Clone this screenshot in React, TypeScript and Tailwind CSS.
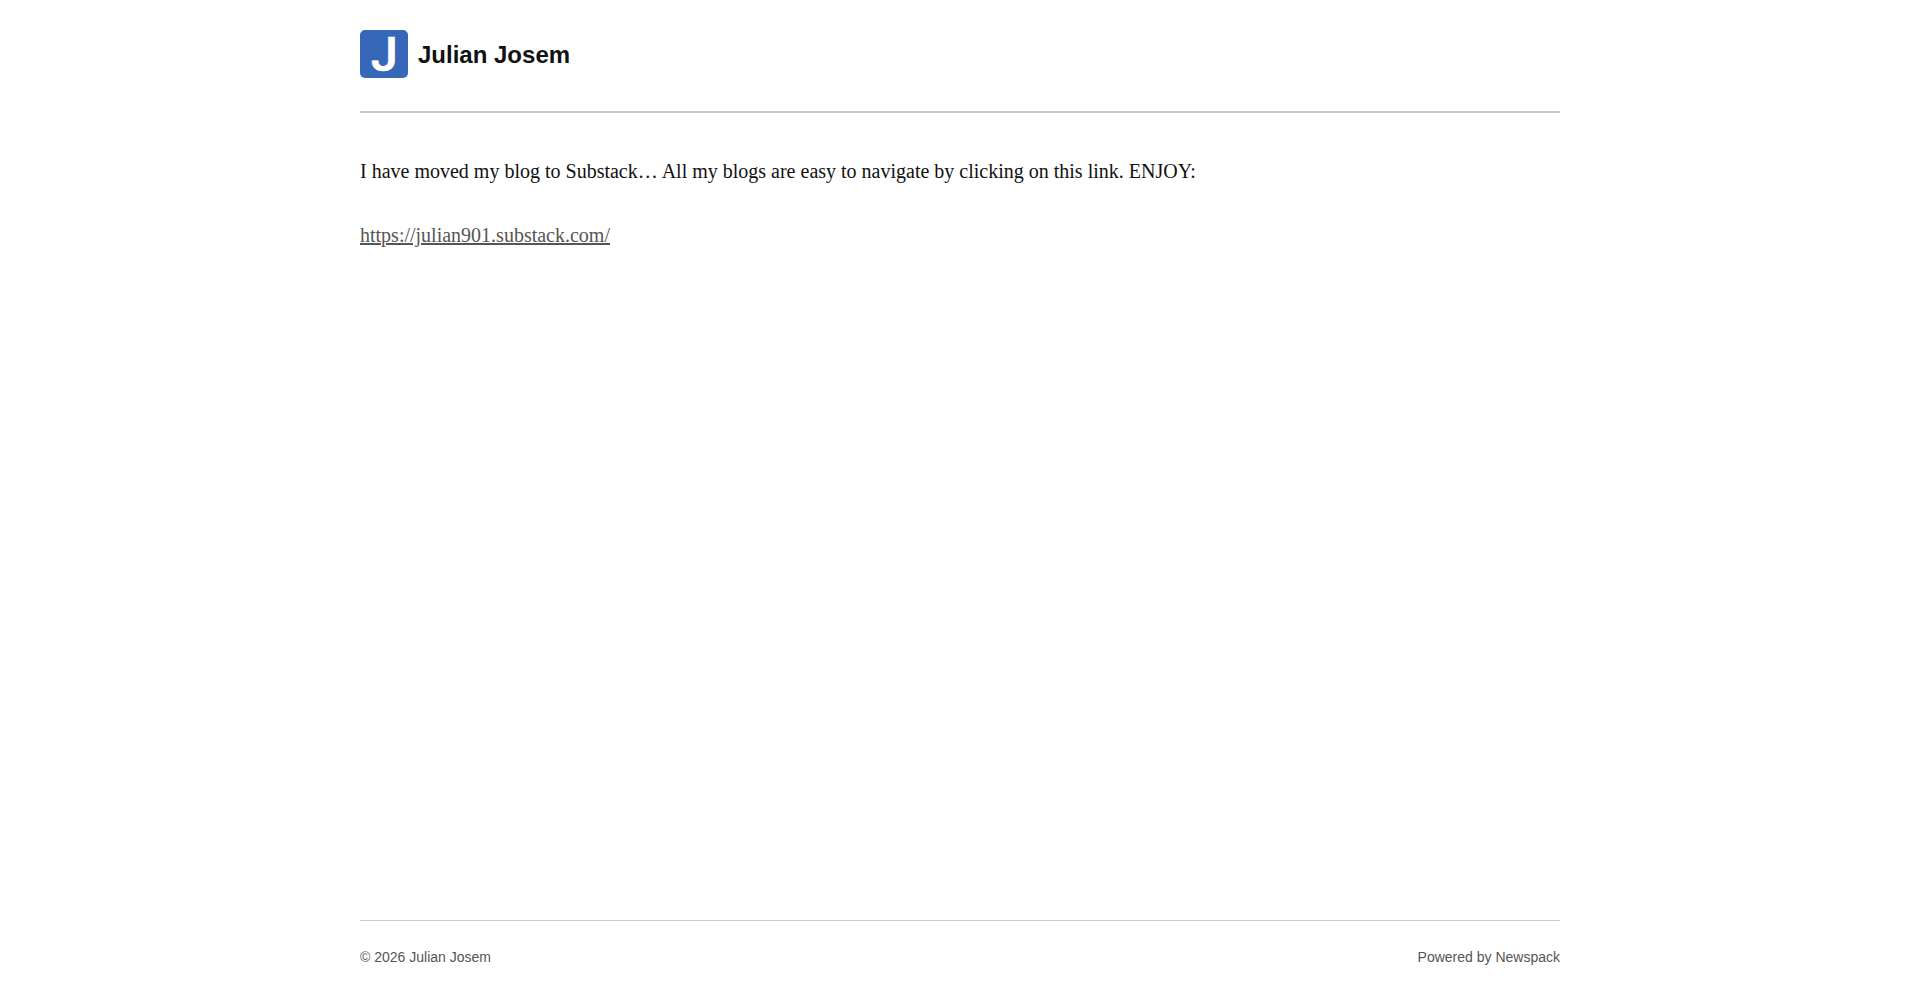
export default function App() {
  return (
    <div className="min-h-screen flex flex-col bg-white text-[#111] font-['Liberation_Sans',sans-serif]">
      <header className="w-full max-w-[1200px] mx-auto">
        <div className="flex items-center gap-2.5 pt-[30px] pb-[33px]">
          <a href="#" aria-label="Julian Josem home">
            <svg viewBox="0 0 48 48" className="w-12 h-12 overflow-visible" aria-hidden="true">
              <rect width="48" height="48" rx="5" fill="#3767b7" />
              <text
                x="11"
                y="41"
                fill="#fff"
                stroke="#fff"
                strokeWidth="0.7"
                className="font-['Roboto',sans-serif] text-[48px] font-medium"
              >
                J
              </text>
            </svg>
          </a>
          <p className="text-2xl font-bold pt-0.5">
            <a href="#">Julian Josem</a>
          </p>
        </div>
        <hr className="border-t-2 border-[#c8c8c8]" />
      </header>

      <main className="w-full max-w-[1200px] mx-auto flex-1 pt-[42px] text-xl leading-8 font-['Liberation_Serif',serif]">
        <p className="mb-8">
          I have moved my blog to Substack… All my blogs are easy to navigate by clicking on this link. ENJOY:
        </p>
        <p>
          <a href="https://julian901.substack.com/" className="underline decoration-2 text-[#555]">
            https://julian901.substack.com/
          </a>
        </p>
      </main>

      <footer className="w-full max-w-[1200px] mx-auto">
        <div className="flex justify-between border-t border-[#ccc] py-6 text-sm leading-6 text-[#555]">
          <span>© 2026 Julian Josem</span>
          <a href="https://newspack.com/">Powered by Newspack</a>
        </div>
      </footer>
    </div>
  );
}
